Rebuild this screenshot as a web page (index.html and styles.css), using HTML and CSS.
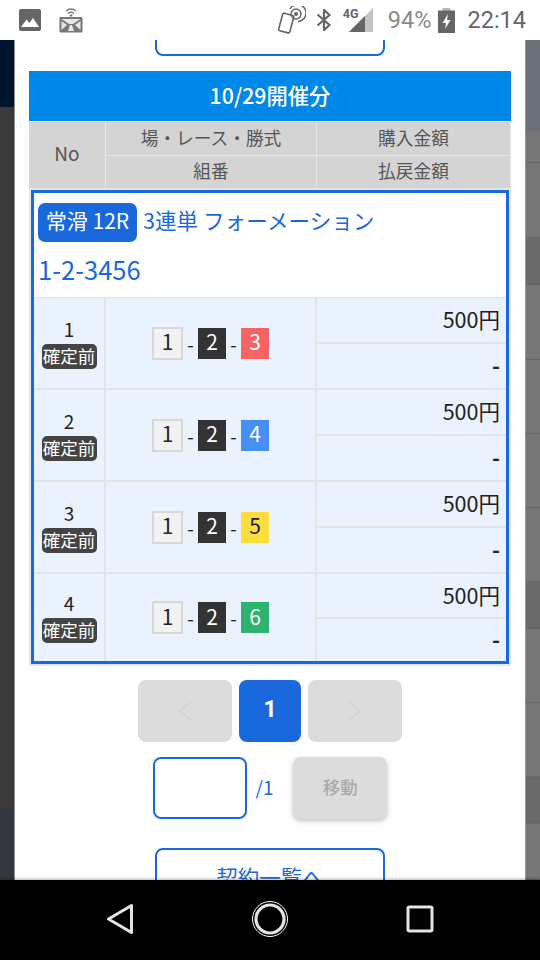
FILE: index.html
```html
<!DOCTYPE html>
<html lang="ja">

<head>
    <meta charset="UTF-8">
    <meta name="viewport" content="width=device-width, initial-scale=1.0">
    <title>契約一覧</title>
    <link rel="stylesheet" href="styles.css">
</head>

<body>
    <header class="status-bar">
        <div class="status-left">
            <svg class="icon-image" width="22" height="22" viewBox="0 0 22 22">
                <rect width="22" height="22" rx="2" fill="#666"/>
                <path d="M2 18 L7.5 10.5 L10.5 14 L14 9 L20 18 Z" fill="#fff"/>
            </svg>
            <svg class="icon-cast" width="24" height="26" viewBox="0 0 24 26">
                <path d="M7 4 Q12 0 17 4 M9 6.5 Q12 4 15 6.5" fill="none" stroke="#777" stroke-width="1.3"/>
                <rect x="10.8" y="7.5" width="2.4" height="2" fill="#777"/>
                <rect x="0.5" y="10" width="23" height="15.5" rx="1" fill="#777"/>
                <path d="M2.5 12 H21.5 L14 17 H10 Z M2.5 14 L8 18 L2.5 23 Z M21.5 14 L16 18 L21.5 23 Z" fill="#e8e8e8"/>
                <path d="M11 18 H13 L15 24 H9 Z" fill="#e8e8e8"/>
            </svg>
        </div>
        <div class="status-right">
            <svg class="icon-nfc" width="29" height="28" viewBox="0 0 29 28">
                <rect x="3.5" y="8" width="11.5" height="18" rx="1.5" transform="rotate(15 9 17)" fill="none" stroke="#666" stroke-width="1.6"/>
                <path d="M13 3 A8.5 8.5 0 1 1 21 15.5" fill="none" stroke="#666" stroke-width="1.5"/>
                <circle cx="19" cy="8" r="5" fill="none" stroke="#666" stroke-width="1.4"/>
                <circle cx="19" cy="8" r="2" fill="#666"/>
            </svg>
            <svg class="icon-bt" width="16" height="22" viewBox="0 0 16 22">
                <path d="M1.5 5.5 L13.5 16 L8 21 V1 L13.5 6 L1.5 16.5" fill="none" stroke="#666" stroke-width="2.2"/>
            </svg>
            <div class="signal">
                <span class="signal-label">4G</span>
                <svg width="24" height="24" viewBox="0 0 24 24">
                    <path d="M0 24 L24 0 V24 Z" fill="#c4c4c4"/>
                    <path d="M0 24 L16 8 V24 Z" fill="#666"/>
                </svg>
            </div>
            <span class="battery-text">94%</span>
            <svg class="icon-battery" width="17" height="25" viewBox="0 0 17 25">
                <rect x="4.5" width="8" height="3" fill="#bbb"/>
                <rect y="2.5" width="17" height="22.5" fill="#666"/>
                <path d="M10 6 L4.5 15 H8 L7 21 L12.5 12 H9 Z" fill="#fff"/>
            </svg>
            <span class="clock">22:14</span>
        </div>
    </header>

    <main class="screen">
        <div class="side side-left">
            <div class="seg seg-navy"></div>
            <div class="seg seg-dark"></div>
            <div class="seg seg-slate"></div>
        </div>

        <div class="modal">
            <a class="outline-btn outline-top"></a>

            <section class="history">
                <h2 class="history-title">10/29開催分</h2>

                <div class="history-head">
                    <div class="head-cell head-no">No</div>
                    <div class="head-cell">場・レース・勝式</div>
                    <div class="head-cell">購入金額</div>
                    <div class="head-cell">組番</div>
                    <div class="head-cell">払戻金額</div>
                </div>

                <div class="card">
                    <div class="card-title">
                        <div class="title-line">
                            <span class="venue">常滑 12R</span>
                            <span class="title-kind">3連単 フォーメーション</span>
                        </div>
                        <div class="title-combo">1-2-3456</div>
                    </div>

                    <div class="bet-row">
                        <div class="bet-no">
                            <span class="bet-num">1</span>
                            <span class="state">確定前</span>
                        </div>
                        <div class="bet-combo">
                            <span class="ball ball-1">1</span><span class="dash">-</span>
                            <span class="ball ball-2">2</span><span class="dash">-</span>
                            <span class="ball ball-3">3</span>
                        </div>
                        <div class="bet-money">
                            <div class="amount">500円</div>
                            <div class="amount amount-pay">-</div>
                        </div>
                    </div>

                    <div class="bet-row">
                        <div class="bet-no">
                            <span class="bet-num">2</span>
                            <span class="state">確定前</span>
                        </div>
                        <div class="bet-combo">
                            <span class="ball ball-1">1</span><span class="dash">-</span>
                            <span class="ball ball-2">2</span><span class="dash">-</span>
                            <span class="ball ball-4">4</span>
                        </div>
                        <div class="bet-money">
                            <div class="amount">500円</div>
                            <div class="amount amount-pay">-</div>
                        </div>
                    </div>

                    <div class="bet-row">
                        <div class="bet-no">
                            <span class="bet-num">3</span>
                            <span class="state">確定前</span>
                        </div>
                        <div class="bet-combo">
                            <span class="ball ball-1">1</span><span class="dash">-</span>
                            <span class="ball ball-2">2</span><span class="dash">-</span>
                            <span class="ball ball-5">5</span>
                        </div>
                        <div class="bet-money">
                            <div class="amount">500円</div>
                            <div class="amount amount-pay">-</div>
                        </div>
                    </div>

                    <div class="bet-row bet-row-last">
                        <div class="bet-no">
                            <span class="bet-num">4</span>
                            <span class="state">確定前</span>
                        </div>
                        <div class="bet-combo">
                            <span class="ball ball-1">1</span><span class="dash">-</span>
                            <span class="ball ball-2">2</span><span class="dash">-</span>
                            <span class="ball ball-6">6</span>
                        </div>
                        <div class="bet-money">
                            <div class="amount">500円</div>
                            <div class="amount amount-pay">-</div>
                        </div>
                    </div>
                </div>
            </section>

            <div class="pager">
                <div class="page-btn page-arrow">
                    <svg width="16" height="20" viewBox="0 0 16 20">
                        <path d="M14 1 L3 10 L14 19" fill="none" stroke="#d2d2d2" stroke-width="1.6"/>
                    </svg>
                </div>
                <div class="page-btn page-current">1</div>
                <div class="page-btn page-arrow">
                    <svg width="16" height="20" viewBox="0 0 16 20">
                        <path d="M2 1 L13 10 L2 19" fill="none" stroke="#d2d2d2" stroke-width="1.6"/>
                    </svg>
                </div>
            </div>

            <div class="jump">
                <div class="jump-input"></div>
                <span class="jump-total">/1</span>
                <div class="jump-btn">移動</div>
            </div>

            <a class="outline-btn outline-bottom">契約一覧へ</a>
        </div>

        <div class="side side-right">
            <div class="seg seg-top"></div>
            <div class="seg seg-row seg-h32"></div>
            <div class="seg seg-row seg-h75"></div>
            <div class="seg seg-row seg-h47 seg-deep"></div>
            <div class="seg seg-row seg-h75b"></div>
            <div class="seg seg-row seg-h74"></div>
            <div class="seg seg-row seg-h74"></div>
            <div class="seg seg-row seg-h74"></div>
            <div class="seg seg-row seg-h47 seg-deep"></div>
            <div class="seg seg-row seg-h74"></div>
            <div class="seg seg-row seg-h74"></div>
            <div class="seg seg-row seg-h47 seg-deep"></div>
            <div class="seg seg-row seg-fill"></div>
        </div>
    </main>

    <nav class="nav-bar">
        <svg class="nav-icon" width="28" height="32" viewBox="0 0 28 32">
            <path d="M25.5 2.5 V29.5 L2.5 16 Z" fill="none" stroke="#e4e4e4" stroke-width="3" stroke-linejoin="round"/>
        </svg>
        <svg class="nav-icon" width="38" height="38" viewBox="0 0 38 38">
            <circle cx="19" cy="19" r="17.5" fill="none" stroke="#fff" stroke-width="1"/>
            <circle cx="19" cy="19" r="14" fill="none" stroke="#e4e4e4" stroke-width="3.2"/>
        </svg>
        <svg class="nav-icon" width="28" height="28" viewBox="0 0 28 28">
            <rect x="2" y="2" width="24" height="24" rx="1.5" fill="none" stroke="#e4e4e4" stroke-width="3"/>
        </svg>
    </nav>
</body>

</html>
```

FILE: styles.css
```css
* {
    box-sizing: border-box;
}

body {
    margin: 0;
    width: 540px;
    height: 960px;
    overflow: hidden;
    display: flex;
    flex-direction: column;
    font-family: "Noto Sans CJK JP", "Noto Sans", sans-serif;
    background: #000;
}

/* status bar */
.status-bar {
    height: 40px;
    flex: none;
    background: #fff;
    display: flex;
    justify-content: space-between;
    align-items: center;
    font-family: Roboto, sans-serif;
}

.status-left {
    display: flex;
    align-items: center;
    gap: 18px;
    padding-left: 19px;
}

.status-right {
    display: flex;
    align-items: center;
    padding-right: 14px;
}

.icon-nfc {
    margin-right: 10px;
}

.icon-bt {
    margin-right: 11px;
}

.signal {
    position: relative;
    width: 30px;
    height: 24px;
    margin-right: 15px;
    display: flex;
    justify-content: flex-end;
    align-items: flex-end;
}

.signal-label {
    position: absolute;
    top: -2px;
    left: 0;
    font-size: 12.5px;
    font-weight: 700;
    color: #666;
}

.battery-text {
    font-size: 23.5px;
    color: #8a8a8a;
    margin-right: 7px;
}

.icon-battery {
    margin-right: 12px;
}

.clock {
    font-size: 23.5px;
    color: #666;
}

/* dimmed page behind the dialog */
.screen {
    height: 840px;
    flex: none;
    display: flex;
    overflow: hidden;
}

.side {
    width: 15px;
    flex: none;
    display: flex;
    flex-direction: column;
}

.side-left {
    border-right: 1px solid #8e8e8e;
}

.side-right {
    border-left: 1px solid #9a9a9a;
}

.seg-navy {
    height: 67px;
    background: #01152f;
}

.seg-dark {
    height: 702px;
    background: #3a3a3a;
}

.seg-slate {
    flex: 1;
    background: #33383f;
}

.seg-top {
    height: 91px;
    background: #6c7078;
}

.seg-row {
    background: #767676;
    border-bottom: 1px solid #666;
}

.seg-deep {
    background: #6a6a6a;
}

.seg-h32 {
    height: 32px;
}

.seg-h75 {
    height: 75px;
}

.seg-h47 {
    height: 47px;
}

.seg-h75b {
    height: 75px;
}

.seg-h74 {
    height: 74px;
}

.seg-fill {
    flex: 1;
}

/* dialog */
.modal {
    flex: 1;
    background: #fff;
    padding: 0 14px;
    display: flex;
    flex-direction: column;
    align-items: center;
}

.outline-btn {
    width: 230px;
    height: 60px;
    flex: none;
    border: 2px solid #1a69dc;
    border-radius: 8px;
    background: #fff;
    color: #1a69dc;
    font-size: 21.5px;
    padding-bottom: 4px;
    display: flex;
    justify-content: center;
    align-items: center;
}

.outline-top {
    margin-top: -44px;
    margin-bottom: 15px;
}

.history {
    width: 482px;
    flex: none;
}

.history-title {
    margin: 0;
    height: 50px;
    padding-bottom: 4px;
    background: #0088e8;
    color: #fff;
    font-size: 21.3px;
    font-weight: 500;
    display: flex;
    justify-content: center;
    align-items: center;
}

.history-head {
    display: grid;
    grid-template-columns: 76px 210px 1fr;
    grid-template-rows: 33px 32px;
    gap: 1px 1px;
    background: #e6e6e6;
    padding: 1px 1px 2px 0;
}

.head-cell {
    background: #d4d4d4;
    color: #555;
    font-size: 17.7px;
    padding-bottom: 4px;
    display: flex;
    justify-content: center;
    align-items: center;
}

.head-no {
    grid-row: span 2;
    font-size: 19px;
    padding-bottom: 5px;
}

.card {
    border: 3px solid #1a69dc;
    outline: 2px solid #e6e6e6;
    margin: 0 2px;
    background: #eaf2fe;
}

.card-title {
    height: 105px;
    background: #fff;
    color: #1a69dc;
    padding: 10px 0 0 4px;
    border-bottom: 1px solid #e4e4e4;
}

.title-line {
    display: flex;
    align-items: center;
    gap: 6px;
    height: 39px;
}

.title-kind {
    font-size: 21.6px;
    padding-bottom: 6px;
}

.venue {
    width: 99px;
    height: 39px;
    padding-bottom: 5px;
    background: #1a69dc;
    color: #fff;
    border-radius: 7px;
    font-size: 21px;
    display: flex;
    justify-content: center;
    align-items: center;
    white-space: nowrap;
}

.title-combo {
    font-size: 25.5px;
    line-height: 30px;
    margin-top: 12px;
}

.bet-row {
    display: grid;
    grid-template-columns: 72px 211px 1fr;
    height: 92px;
    border-bottom: 2px solid #e4e4e4;
}

.bet-row-last {
    height: 87px;
    border-bottom: none;
}

.bet-no {
    border-right: 2px solid #e4e4e4;
    display: flex;
    flex-direction: column;
    align-items: center;
    justify-content: center;
    color: #222;
    font-size: 19px;
}

.bet-num {
    line-height: 22px;
    margin-bottom: 4px;
}

.state {
    width: 55px;
    height: 25px;
    background: #444;
    color: #fff;
    border-radius: 5px;
    font-size: 17.5px;
    line-height: 23px;
    text-align: center;
    white-space: nowrap;
}

.bet-combo {
    border-right: 2px solid #e4e4e4;
    display: flex;
    justify-content: center;
    align-items: center;
}

.ball {
    width: 28px;
    height: 31px;
    padding-bottom: 4px;
    display: flex;
    justify-content: center;
    align-items: center;
    font-size: 21px;
    color: #fff;
}

.ball-1 {
    width: 31px;
    height: 33px;
    background: #f2f2f2;
    border: 2px solid #d8d8d8;
    color: #222;
}

.ball-2 {
    background: #333;
}

.ball-3 {
    background: #f56363;
}

.ball-4 {
    background: #478ff5;
}

.ball-5 {
    background: #fcdd3b;
    color: #222;
}

.ball-6 {
    background: #2eb36e;
}

.dash {
    width: 15px;
    text-align: center;
    color: #222;
    font-size: 19px;
}

.bet-money {
    display: flex;
    flex-direction: column;
}

.amount {
    flex: 1;
    display: flex;
    justify-content: flex-end;
    align-items: center;
    padding: 0 6px 3px 0;
    font-size: 21.5px;
    color: #222;
    border-bottom: 2px solid #e4e4e4;
}

.amount-pay {
    border-bottom: none;
    font-weight: 700;
}

.bet-row-last .amount {
    flex: none;
    height: 45px;
}

.bet-row-last .amount-pay {
    height: 42px;
}

/* pager */
.pager {
    display: flex;
    gap: 7px;
    margin-top: 16px;
    flex: none;
}

.page-btn {
    height: 62px;
    border-radius: 8px;
    display: flex;
    justify-content: center;
    align-items: center;
}

.page-arrow {
    width: 94px;
    background: #dcdcdc;
}

.page-current {
    width: 62px;
    padding-bottom: 3px;
    background: #1a69dc;
    color: #fff;
    font-family: Roboto, sans-serif;
    font-size: 23px;
    font-weight: 700;
}

.jump {
    display: flex;
    align-items: center;
    margin-top: 15px;
    flex: none;
    width: 234px;
}

.jump-input {
    width: 94px;
    height: 62px;
    border: 2px solid #1a69dc;
    border-radius: 8px;
    background: #fff;
}

.jump-total {
    width: 47px;
    padding: 0 0 4px 9px;
    color: #1a69dc;
    font-size: 19px;
}

.jump-btn {
    width: 94px;
    height: 62px;
    padding-bottom: 3px;
    border-radius: 8px;
    background: #dcdcdc;
    color: #aaa;
    font-size: 17.5px;
    font-weight: 500;
    box-shadow: 0 2px 5px rgba(0, 0, 0, 0.25);
    display: flex;
    justify-content: center;
    align-items: center;
}

.outline-bottom {
    margin-top: 29px;
}

/* android nav */
.nav-bar {
    height: 80px;
    flex: none;
    background: #000;
    display: flex;
    align-items: center;
    justify-content: space-between;
    padding: 0 106px 2px 106px;
    box-shadow: 0 -1px 3px rgba(0, 0, 0, 0.3);
    position: relative;
}
```
